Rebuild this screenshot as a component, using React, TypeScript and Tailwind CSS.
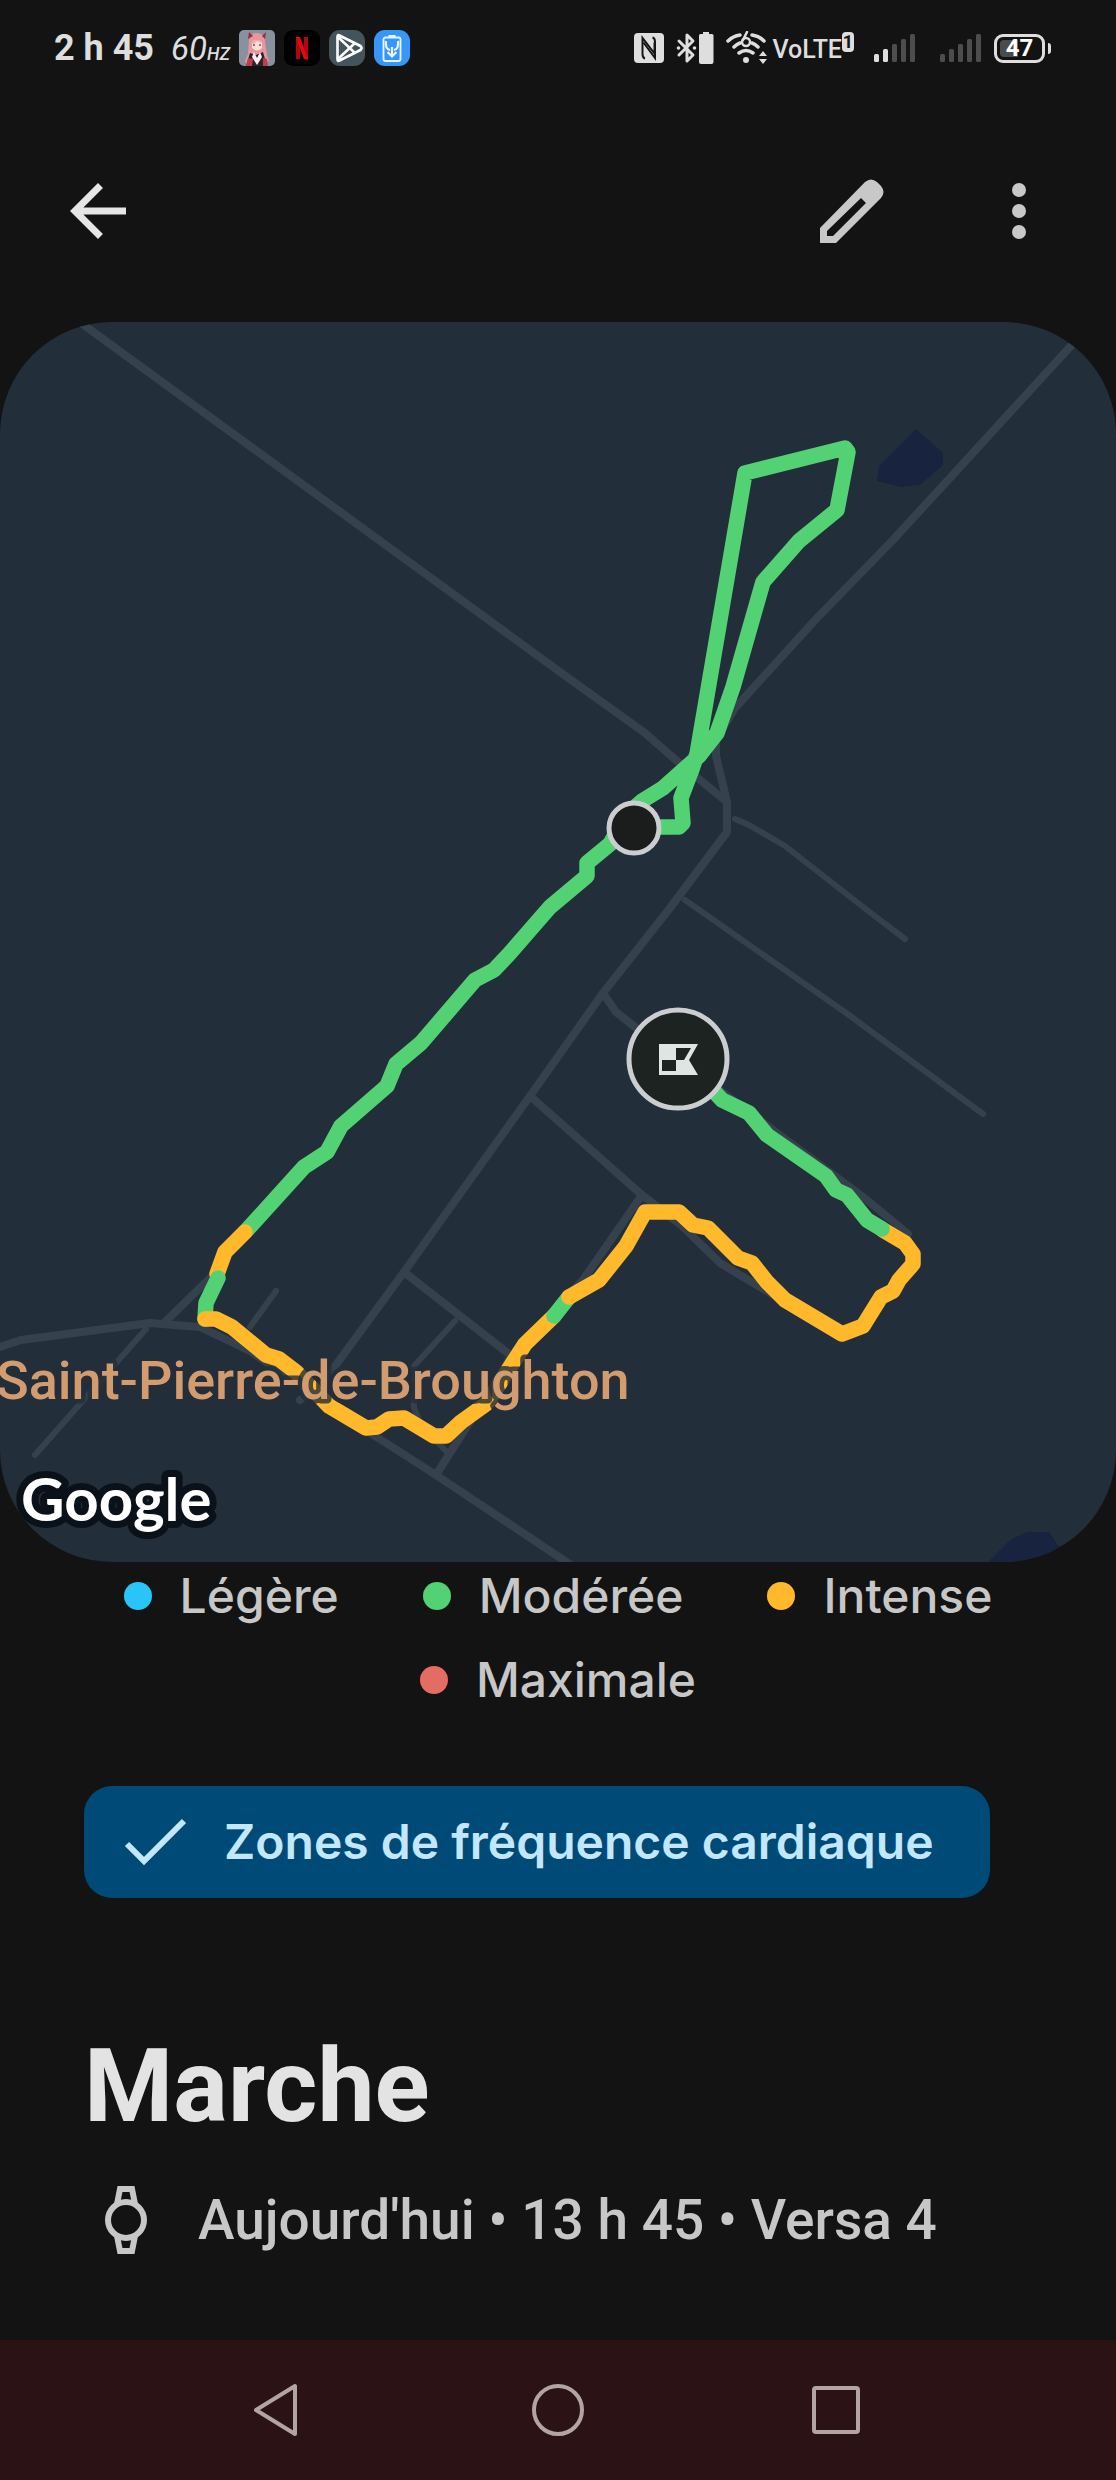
type Point = [number, number]

type Segment = {
  zone: "moderate" | "intense"
  points: Point[]
}

const zoneColors = {
  moderate: "#52d273",
  intense: "#ffb92a",
}

const legend = [
  { label: "Légère", dot: "bg-[#29c5f6]" },
  { label: "Modérée", dot: "bg-[#52d273]" },
  { label: "Intense", dot: "bg-[#ffb92a]" },
  { label: "Maximale", dot: "bg-[#e56b65]" },
]

const roads: Point[][] = [
  [[66, 312], [560, 672], [645, 733], [677, 761], [727, 802]],
  [[1090, 325], [960, 467], [892, 541], [817, 618], [735, 708], [716, 740], [716, 756], [727, 802], [727, 832], [670, 908], [603, 993], [530, 1096], [404, 1272], [322, 1384], [300, 1400]],
  [[603, 993], [616, 1012], [635, 1027], [867, 1200], [908, 1234]],
  [[530, 1096], [642, 1195], [681, 1225], [720, 1263], [760, 1287], [842, 1335]],
  [[642, 1195], [583, 1280], [511, 1357], [436, 1475]],
  [[404, 1272], [509, 1354]],
  [[0, 1347], [21, 1340], [150, 1323], [200, 1327], [250, 1351], [375, 1436], [436, 1475], [571, 1565]],
  [[164, 1323], [213, 1275]],
]

const lanes: Point[][] = [
  [[735, 819], [749, 825], [785, 846], [867, 910], [905, 939]],
  [[685, 900], [849, 1015], [983, 1114]],
  [[455, 1321], [414, 1366], [414, 1408], [421, 1425], [446, 1451]],
  [[146, 1329], [35, 1455]],
  [[250, 1327], [276, 1291]],
]

const route: Segment[] = [
  {
    zone: "moderate",
    points: [[634, 827], [679, 827], [683, 823], [681, 798], [692, 769], [697, 754], [745, 473], [845, 448], [848, 452], [837, 510], [799, 541], [763, 582], [733, 687], [717, 733], [699, 756], [663, 788], [642, 801], [626, 815], [610, 844], [587, 863], [587, 876], [550, 907], [510, 953], [494, 970], [475, 980], [421, 1043], [396, 1064], [387, 1086], [341, 1126], [327, 1152], [304, 1167], [246, 1231]],
  },
  { zone: "intense", points: [[245, 1232], [225, 1252], [217, 1274]] },
  { zone: "moderate", points: [[218, 1278], [206, 1303], [205, 1319]] },
  {
    zone: "intense",
    points: [[205, 1319], [216, 1319], [232, 1327], [266, 1355], [279, 1359], [296, 1372], [329, 1406], [366, 1428], [377, 1427], [389, 1419], [404, 1418], [434, 1436], [446, 1436], [461, 1422], [486, 1404], [500, 1383], [514, 1361], [525, 1344], [554, 1316]],
  },
  { zone: "moderate", points: [[554, 1316], [569, 1297]] },
  {
    zone: "intense",
    points: [[569, 1297], [599, 1280], [626, 1246], [645, 1212], [679, 1212], [693, 1225], [708, 1228], [738, 1258], [752, 1263], [767, 1282], [785, 1300], [842, 1334], [863, 1326], [881, 1297], [893, 1291], [899, 1280], [913, 1264], [913, 1254], [905, 1243], [883, 1230]],
  },
  {
    zone: "moderate",
    points: [[882, 1229], [867, 1220], [847, 1195], [836, 1190], [826, 1176], [767, 1135], [749, 1113], [722, 1100], [711, 1088]],
  },
]

const toPoints = (points: Point[]) => points.map((p) => p.join(",")).join(" ")

function StatusBar() {
  return (
    <div className="flex h-24 items-center justify-between pr-[65px] pl-[54px] text-[#dedede]">
      <div className="flex items-center gap-[9px]">
        <span className="text-[36px] leading-none font-bold">2 h 45</span>
        <span className="flex items-baseline pl-2 leading-none italic">
          <span className="text-[33px]">60</span>
          <span className="text-[18px] font-medium">HZ</span>
        </span>
        <AvatarIcon />
        <svg viewBox="0 0 36 36" className="size-9" aria-hidden="true">
          <rect width="36" height="36" rx="9" fill="#000" />
          <path d="M12 7h4v22l-4 .5z" fill="#b1060f" />
          <path d="M20 7h4v22.5l-4-.5z" fill="#b1060f" />
          <path d="M12 7h4l8 22.500-4-.5z" fill="#e50914" />
        </svg>
        <svg viewBox="0 0 36 36" className="size-9" aria-hidden="true">
          <rect width="36" height="36" rx="11" fill="#44545b" />
          <path d="M8.500 6.500v23q0 2 2 1l21-10.500q2-2 0-4L10.500 5.500q-2-1-2 1zM9 7l17 16M9 29l17-16" fill="none" stroke="#fff" strokeWidth="2.600" strokeLinejoin="round" />
        </svg>
        <svg viewBox="0 0 36 36" className="size-9" aria-hidden="true">
          <rect width="36" height="36" rx="11" fill="#3797f8" />
          <path d="M14.500 5h7v3h-7z" fill="#e8f4ff" />
          <rect x="9.500" y="7.500" width="17" height="23.500" rx="2" fill="none" stroke="#e8f4ff" strokeWidth="1.800" />
          <path d="M12 11q-1 8 4 9M24 11q1 8-4 9M18 17v9M13.500 22l4.500 4.500 4.500-4.500" fill="none" stroke="#e8f4ff" strokeWidth="2.200" />
        </svg>
      </div>
      <div className="flex items-center">
        <svg viewBox="0 0 30 30" className="mr-3 size-[30px]" aria-hidden="true">
          <rect width="30" height="30" rx="4" fill="#dedede" />
          <path d="M11 25.500Q8.500 25 8.500 21V5l12 15.500V9.500" fill="none" stroke="#151515" strokeWidth="2" />
          <path d="M18.500 4.500q2.500.5 2.500 4.500v16L9.500 9.500" fill="none" stroke="#151515" strokeWidth="2" />
        </svg>
        <svg viewBox="0 0 38 34" className="mr-3 h-[34px] w-[38px]" aria-hidden="true">
          <path d="M3 10l14 14-6 6V4l6 6L3 24" fill="none" stroke="#dedede" strokeWidth="3" strokeLinejoin="round" strokeLinecap="round" />
          <circle cx="2.500" cy="17" r="1.800" fill="#dedede" />
          <circle cx="18.500" cy="17" r="1.800" fill="#dedede" />
          <path d="M27 1h6v2h3q1.500 0 1.500 1.500V31q0 2-2 2H25q-2 0-2-2V4.500Q23 3 24.500 3H27z" fill="#dedede" />
        </svg>
        <WifiIcon />
        <span className="flex items-start">
          <span className="pt-1 text-[25px] leading-7 font-medium">VoLTE</span>
          <span className="h-5 w-3 rounded-sm bg-[#dedede] text-center text-[18px] leading-5 font-bold text-[#151515]">1</span>
        </span>
        <div className="flex gap-6 pr-3 pl-5">
          <SignalIcon active={2} />
          <SignalIcon active={0} />
        </div>
        <span className="flex items-center gap-[3px]">
          <span className="relative flex h-[29px] w-[51px] items-center justify-center overflow-hidden rounded-[9px] border-3 border-[#dedede]">
            <span className="absolute inset-y-[3px] left-[3px] w-[18px] rounded-l-sm bg-[#4b4b4b]" />
            <span className="relative text-[24px] leading-none font-bold text-white">47</span>
          </span>
          <span className="h-[11px] w-[3px] rounded-r-sm bg-[#dedede]" />
        </span>
      </div>
    </div>
  )
}

function AvatarIcon() {
  return (
    <svg viewBox="0 0 36 36" className="size-9" aria-hidden="true">
      <clipPath id="avatar">
        <rect width="36" height="36" rx="5" />
      </clipPath>
      <g clipPath="url(#avatar)">
        <rect width="36" height="36" fill="#87919f" />
        <path d="M10 10Q11 3 18 3t8 8l2 14 2 6-8 5H9l-3-5 3-7z" fill="#e8959c" />
        <path d="M9 9l1-7 4 4zM26 9l1-7-4 4z" fill="#9c2d3c" />
        <path d="M13 12q5-4 10 0v6q-5 5-10 0z" fill="#fbe0d8" />
        <path d="M12 13q3-6 12-1l-2 1-4-2-3 3z" fill="#f3aab0" />
        <path d="M14 15h2M20 15h2" stroke="#a33845" strokeWidth="1.500" />
        <path d="M11 23l6 2 7-3 4 14H7z" fill="#33212a" />
        <path d="M15 22l3 6 3-6 2 5-5 8-5-8z" fill="#f7eeee" />
        <path d="M9 28l5 1-1 7H7zM24 28l4 1 1 7h-5z" fill="#b64250" />
      </g>
    </svg>
  )
}

function WifiIcon() {
  return (
    <svg viewBox="0 0 42 34" className="mr-1 h-[34px] w-[42px]" aria-hidden="true">
      <g fill="none" stroke="#dedede" strokeWidth="3.500" strokeLinecap="round">
        <path d="M2 10q5-5 12-6M26 4q7 1 12 6M8 16q3-3 6-4M26 12q3 1 6 4M13 22q7-5 14 0" />
        <circle cx="20" cy="11" r="4" strokeWidth="2.500" />
        <path d="M17 9l4-8" strokeWidth="2.500" />
      </g>
      <circle cx="20" cy="29" r="3" fill="#dedede" />
      <path d="M37 20l4 5h-8zM37 33l4-5h-8z" fill="#dedede" />
    </svg>
  )
}

function SignalIcon({ active }: { active: number }) {
  return (
    <svg viewBox="0 0 42 28" className="h-7 w-[42px]" aria-hidden="true">
      {[8, 13, 18, 23, 28].map((height, index) => (
        <rect key={height} x={index * 9} y={28 - height} width="5" height={height} rx="1.500" fill={index < active ? "#dedede" : "#4d4d4d"} />
      ))}
    </svg>
  )
}

function TopBar() {
  return (
    <header className="flex h-[226px] items-center justify-between pt-1 pr-[55px] pl-[56px]">
      <button type="button" aria-label="Retour">
        <svg viewBox="0 0 24 24" className="size-[84px]" fill="#e6e6e6">
          <path d="M20 11H7.830l5.590-5.590L12 4l-8 8 8 8 1.410-1.410L7.830 13H20v-2z" />
        </svg>
      </button>
      <div className="flex items-center gap-[84px]">
        <button type="button" aria-label="Modifier">
          <svg viewBox="0 0 84 84" className="size-[84px]">
            <path fillRule="evenodd" fill="#c8c8c8" d="M11 74V59L56 13q6-5 12 0l4 4q5 6 0 12L27 74zM18 67h6L57 34l-5-5L18 62z" />
          </svg>
        </button>
        <button type="button" aria-label="Plus d'options">
          <svg viewBox="0 0 84 84" className="size-[84px]" fill="#c8c8c8">
            <circle cx="42" cy="21" r="7" />
            <circle cx="42" cy="42" r="7" />
            <circle cx="42" cy="63" r="7" />
          </svg>
        </button>
      </div>
    </header>
  )
}

function RouteMap() {
  return (
    <div className="overflow-hidden rounded-[112px] bg-[#232e3b]">
      <svg viewBox="0 322 1116 1240" className="block w-full" role="img" aria-label="Parcours">
        <g fill="#17233f">
          <path d="M916 429l27 24v12l-23 20-19 2-24-6 2-15z" />
          <path d="M988 1562l22-22 17-8h22l10 15v15z" />
        </g>
        <g fill="none" stroke="#36414e" strokeLinejoin="round" strokeLinecap="round">
          {roads.map((points, index) => (
            <polyline key={index} points={toPoints(points)} strokeWidth="8" />
          ))}
          {lanes.map((points, index) => (
            <polyline key={index} points={toPoints(points)} strokeWidth="6" />
          ))}
        </g>
        <g fill="none" strokeWidth="15.500" strokeLinejoin="round" strokeLinecap="round">
          {route.map((segment, index) => (
            <polyline key={index} points={toPoints(segment.points)} stroke={zoneColors[segment.zone]} />
          ))}
        </g>
        <circle cx="634" cy="828" r="25" fill="#1a1d1b" stroke="#cccdd0" strokeWidth="5" />
        <circle cx="678" cy="1059" r="49" fill="#1c2321" stroke="#cccdd0" strokeWidth="5" />
        <path fillRule="evenodd" fill="#dfe5e2" d="M659 1044h39l-9 16 9 15h-39zM676 1048v12h8l7-12zM662 1060v11h14v-11z" />
        <text x="-4" y="1399" fill="#d29c6e" stroke="#232e3b" strokeOpacity="0.800" strokeWidth="9" strokeLinejoin="round" paintOrder="stroke" className="font-[Roboto,sans-serif] text-[54px] font-medium">
          Saint-Pierre-de-Broughton
        </text>
        <text x="21" y="1521" fill="#fff" stroke="#0b1118" strokeWidth="14" strokeLinejoin="round" paintOrder="stroke" className="font-[Lato,sans-serif] text-[60px] font-bold">
          Google
        </text>
      </svg>
    </div>
  )
}

function Legend() {
  return (
    <ul className="flex flex-wrap justify-center gap-x-[84px] px-[84px] text-[48px] leading-[84px] font-medium text-[#c7c7c7]">
      {legend.map((item) => (
        <li key={item.label} className="flex items-center gap-[28px]">
          <span className={`size-7 rounded-full ${item.dot}`} />
          {item.label}
        </li>
      ))}
    </ul>
  )
}

function NavBar() {
  return (
    <nav className="flex h-[140px] items-center justify-center gap-[222px] bg-[#2b1315] text-[#b3a3a4]">
      <button type="button" aria-label="Précédent">
        <svg viewBox="0 0 56 56" className="size-14" fill="none" stroke="currentColor" strokeWidth="4" strokeLinejoin="round">
          <path d="M43 4v48L4 28z" />
        </svg>
      </button>
      <button type="button" aria-label="Accueil">
        <svg viewBox="0 0 56 56" className="size-14" fill="none" stroke="currentColor" strokeWidth="4">
          <circle cx="28" cy="28" r="24" />
        </svg>
      </button>
      <button type="button" aria-label="Applications récentes">
        <svg viewBox="0 0 56 56" className="size-14" fill="none" stroke="currentColor" strokeWidth="4">
          <rect x="6" y="6" width="44" height="44" rx="2" />
        </svg>
      </button>
    </nav>
  )
}

function App() {
  return (
    <div className="flex min-h-screen flex-col bg-[#131313] font-[Roboto,sans-serif]">
      <StatusBar />
      <TopBar />
      <main className="flex-1">
        <RouteMap />
        <section className="font-[Inter,sans-serif]">
          <div className="-mt-2">
            <Legend />
          </div>
          <div className="px-[84px] pt-16">
            <button type="button" aria-pressed="true" className="flex h-28 items-center gap-[32px] rounded-[28px] bg-[#004a77] pr-[56px] pl-[36px] text-[48px] font-semibold text-[#c2e7ff]">
              <svg viewBox="0 0 72 72" className="size-[72px]" fill="none" stroke="currentColor" strokeWidth="6">
                <path d="M7 38l17 17L64 15" />
              </svg>
              Zones de fréquence cardiaque
            </button>
          </div>
        </section>
        <section className="px-[84px] pt-[128px]">
          <h1 className="text-[102px] leading-[120px] font-bold text-[#e3e3e3]">Marche</h1>
          <p className="flex items-center gap-[30px] pt-8 text-[55px] leading-[84px] font-medium text-[#c7c7c7]">
            <svg viewBox="0 0 84 84" className="size-[84px]" fill="none" stroke="currentColor" strokeWidth="6">
              <circle cx="42" cy="42" r="18" />
              <path d="M33 26l3-15h12l3 15M33 58l3 15h12l3-15" />
            </svg>
            Aujourd'hui • 13 h 45 • Versa 4
          </p>
        </section>
      </main>
      <NavBar />
    </div>
  )
}

export default App
